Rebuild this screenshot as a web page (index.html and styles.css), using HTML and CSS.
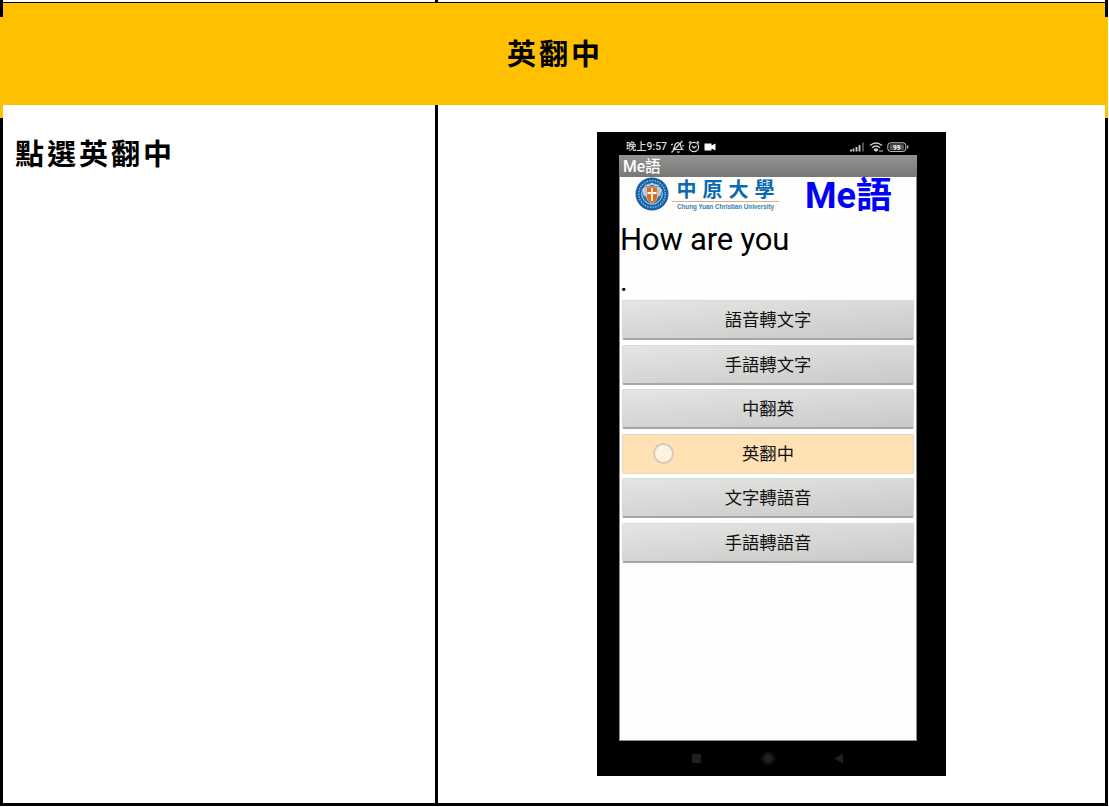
FILE: index.html
```html
<!DOCTYPE html>
<html lang="zh-Hant">
<head>
<meta charset="utf-8">
<title>英翻中</title>
<link rel="stylesheet" href="styles.css">
</head>
<body>
<main class="sheet">
  <div class="rail"></div>
  <div class="table">
    <div class="prev-row"><span class="prev-divider"></span></div>
    <h1 class="band">英翻中</h1>
    <div class="row">
      <div class="cell step">點選英翻中</div>
      <div class="cell shot">
        <div class="phone">
          <div class="status">
            <span class="time">晚上9:57</span>
            <svg class="status-left" width="48" height="14" viewBox="0 0 48 14" fill="none" stroke="#ddd" stroke-width="1.2">
              <path d="M3 9.500C5 8 4 5 6 3.500Q9 1.500 10.500 4.500Q10.500 8 12.500 9.500H4M7 11.500Q8 13 9.500 11.500M12.500 1L1.500 12.500M1 5l2-1M12 6l2-.5"/>
              <circle cx="24" cy="7" r="4.600"/><path d="M22 6l2 2 2.500-2M18.800 3.200l2.300-2M29.200 3.200l-2.300-2"/>
              <path d="M34.500 3.500h7v2l4-2v7l-4-2v2h-7z" fill="#fff" stroke="none"/>
            </svg>
            <svg class="status-right" width="60" height="14" viewBox="0 0 60 14" fill="none" stroke="#ccc">
              <path d="M1 9.500v2M3.500 8.500v3M6.500 7v4.500M9.500 5v6.500" stroke-width="1.800"/><path d="M13 2.500v9" stroke="#777" stroke-width="1.300"/>
              <path d="M20 5.500Q26 .5 32 5.500M22 7.800Q26 4.300 30 7.800M24 10Q26 8.300 28 10" stroke-width="1.500"/>
              <path d="M26 11.500l-1.500-1.500h3zM29 11h4" fill="#ddd"/>
              <rect x="37.800" y="2.800" width="18" height="8.600" rx="2.700"/><path d="M57.700 5.500v3" stroke-width="1.200"/>
              <rect x="39.500" y="4.300" width="14.500" height="5.600" rx="1" fill="#555" stroke="none"/>
              <text x="46.800" y="9.500" class="battery">99</text>
            </svg>
          </div>
          <div class="screen">
            <div class="appbar">Me語</div>
            <div class="brand">
              <svg class="logo" width="165" height="38" viewBox="0 0 165 38">
                <circle cx="33" cy="17" r="16.500" fill="#1762a7"/>
                <circle cx="33" cy="17" r="13.300" fill="none" stroke="#8db9dc" stroke-width="1.600" stroke-dasharray="1.400 1.300"/>
                <circle cx="33" cy="17" r="10.300" fill="#2872b2" stroke="#d7e7f3" stroke-width=".8"/>
                <path d="M24 12l4-2v10l-3-2zM42 12l-4-2v10l3-2zM26 8l4 1 3-3 3 3 4-1" fill="#a9cce5" stroke="#e4eff7" stroke-width=".7"/>
                <path d="M27.500 10.500q5.500-2 11 0V19q0 5-5.500 7.500Q27.500 24 27.500 19z" fill="#e2681d" stroke="#f6d2b7" stroke-width=".6"/>
                <path d="M33 11v13M28.500 16h9" stroke="#fff" stroke-width="1.800"/>
                <text x="57.500" y="19.800" class="uni-zh">中原大學</text>
                <path d="M53 24.500h107" stroke="#e5a88a"/>
                <text x="58" y="32" class="uni-en" textLength="97" lengthAdjust="spacingAndGlyphs">Chung Yuan Christian University</text>
              </svg>
              <strong class="title">Me語</strong>
            </div>
            <p class="phrase">How are you</p>
            <p class="result">.</p>
            <div class="buttons">
              <div class="button">語音轉文字</div>
              <div class="button">手語轉文字</div>
              <div class="button">中翻英</div>
              <div class="button active">英翻中<i class="touch"></i></div>
              <div class="button">文字轉語音</div>
              <div class="button">手語轉語音</div>
            </div>
          </div>
          <svg class="nav" width="349" height="35" viewBox="0 0 349 35" fill="#20201f">
            <rect x="95" y="13" width="9" height="9" rx="1"/>
            <circle cx="171.300" cy="17.500" r="4.800"/><circle cx="171.300" cy="17.500" r="6.500" fill="none" stroke="#1b1b1b"/>
            <path d="M237.300 17.500l8.700-5v10z"/>
          </svg>
        </div>
      </div>
    </div>
  </div>
  <div class="rail"></div>
</main>
</body>
</html>
```
FILE: styles.css
```css
* { box-sizing: border-box; }
body { margin: 0; background: #fff; font-family: Roboto, "Noto Sans CJK TC", sans-serif; color: #000; overflow: hidden; }
.sheet { display: flex; width: 1108px; height: 806px; border-bottom: 3px solid #000; }
.rail { width: 3px; background: linear-gradient(#000 0 17px, #ffc000 17px 118px, #000 118px); }
.table { width: 1102px; display: flex; flex-direction: column; }
.prev-row { height: 3px; border-bottom: 1px solid #000; padding-left: 432px; display: flex; }
.prev-divider { width: 3px; height: 2px; background: #000; }
.band { margin: 0; height: 102px; background: #ffc000; text-align: center; font: 700 29px/98px "Noto Sans CJK TC", sans-serif; letter-spacing: 3px; padding-left: 2px; }
.row { flex: 1; display: grid; grid-template-columns: 435px 667px; }
.step { border-right: 3px solid #000; padding: 25px 12px; font: 700 29px/44px "Noto Sans CJK TC", sans-serif; letter-spacing: 3px; }
.shot { padding: 27px 0 0 159px; }
.phone { width: 349px; height: 644px; background: #000; }
.status { height: 23px; display: flex; align-items: center; padding: 7px 36px 0 29px; color: #ddd; }
.time { font-size: 10.3px; font-weight: 500; line-height: 14px; width: 44px; white-space: nowrap; }
.status-right { margin-left: auto; }
.battery { font: 700 6.5px Roboto, sans-serif; fill: #fff; stroke: none; text-anchor: middle; }
.screen { width: 298px; height: 586px; margin-left: 22px; background: #fefefc; border: 1px solid #8a8a88; border-top: 0; }
.appbar { height: 22px; margin: 0 -1px; padding-left: 4px; background: linear-gradient(#939391, #777775); color: #fff; font-family: Roboto, "Noto Sans CJK TC", sans-serif; font-size: 15.7px; font-weight: 500; line-height: 24px; }
.brand { height: 38px; display: flex; }
.logo { flex: none; margin-left: -1px; overflow: visible; }
.uni-zh { font: 700 20px "Noto Sans CJK TC", sans-serif; letter-spacing: 6px; fill: #0869b1; }
.uni-en { font: 700 6.8px "Liberation Sans", sans-serif; fill: #397fab; }
.title { margin-left: 21px; color: #0000fb; font-family: Roboto, "Noto Sans CJK TC", sans-serif; font-size: 36px; line-height: 39px; white-space: nowrap; }
.phrase { margin: 0; height: 47px; font-size: 31px; line-height: 50px; letter-spacing: -.18px; }
.result { margin: 0; height: 38px; padding-left: 0; font-size: 29px; line-height: 39px; }
.buttons { display: grid; gap: 4.6px; padding: 0 2px; }
.button { position: relative; height: 40px; border: 1px solid #d9d9d7; border-bottom: 2px solid #a6a6a4; border-radius: 2px; background: linear-gradient(175deg, #e5e5e3, #c9c9c8); text-align: center; font-size: 17.3px; line-height: 38px; color: #111; }
.active { background: #ffe1b4; border: 1px solid #e9d9c3; }
.touch { position: absolute; left: 30px; top: 8px; width: 21px; height: 21px; border: 2px solid #d8c9bf; border-radius: 50%; background: #fff2df; }
.nav { display: block; }
```
